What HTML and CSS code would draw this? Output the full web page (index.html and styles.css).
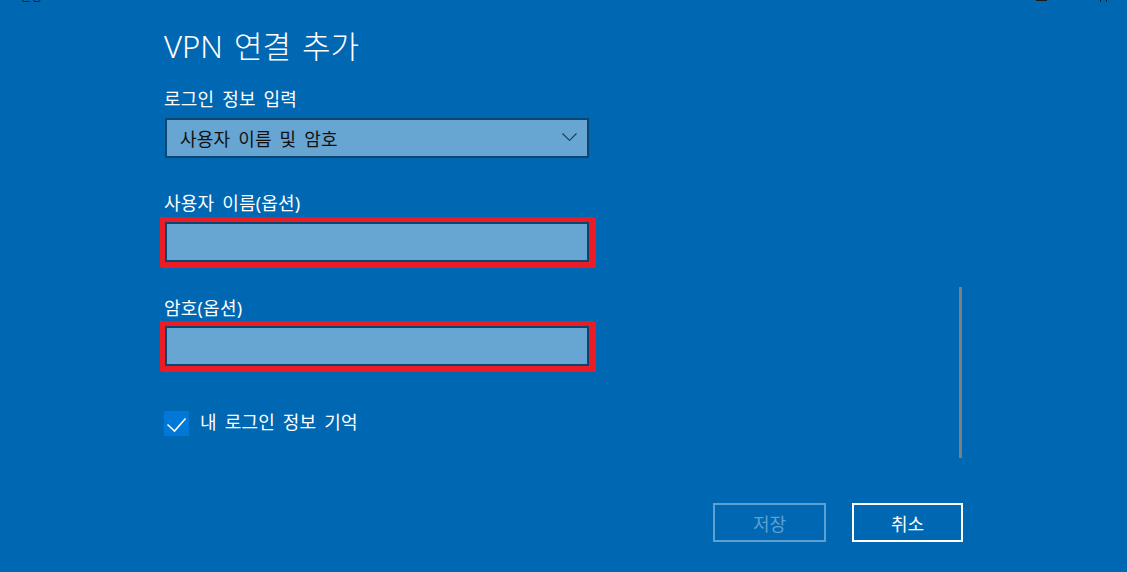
FILE: index.html
```html
<!DOCTYPE html>
<html lang="ko">
<head>
<meta charset="utf-8">
<title>VPN 연결 추가</title>
<link rel="stylesheet" href="styles.css">
</head>
<body>
<div class="titlebar">
  <span class="app-name">설정</span>
  <span class="controls">
    <span class="ctl-min"></span>
    <span class="ctl-close"></span>
  </span>
</div>
<div class="page">
  <h1 class="title">VPN 연결 추가</h1>

  <div class="label label-first">로그인 정보 입력</div>
  <div class="select">
    <span class="select-text">사용자 이름 및 암호</span>
    <svg class="chevron" width="15" height="8" viewBox="0 0 15 8"><polyline points="0.5,0.5 7.5,7.3 14.5,0.5" fill="none" stroke="#1c3950" stroke-width="1.1"/></svg>
  </div>

  <div class="label label-gap">사용자 이름(옵션)</div>
  <div class="input highlight"></div>

  <div class="label label-gap2">암호(옵션)</div>
  <div class="input input2 highlight"></div>

  <div class="check-row">
    <span class="checkbox">
      <svg width="25" height="25" viewBox="0 0 25 25"><polyline points="3.5,13.5 10.5,20 21.5,7.5" fill="none" stroke="#fff" stroke-width="1.6"/></svg>
    </span>
    <span class="check-label">내 로그인 정보 기억</span>
  </div>
</div>

<div class="scrollbar"></div>

<div class="footer">
  <button class="btn btn-disabled" disabled>저장</button>
  <button class="btn btn-primary">취소</button>
</div>
</body>
</html>
```

FILE: styles.css
```css
html, body {
  margin: 0;
  padding: 0;
  background: #0067b3;
  height: 100%;
  overflow: hidden;
}
body {
  font-family: "Noto Sans", "Noto Sans CJK KR", sans-serif;
  color: #ffffff;
  width: 1127px;
  height: 572px;
  position: relative;
}
.titlebar {
  display: flex;
  justify-content: space-between;
  height: 4px;
  overflow: visible;
  color: #1b1b1b;
}
.app-name {
  font-family: "Noto Sans CJK KR", sans-serif;
  font-size: 12px;
  line-height: 14px;
  margin: -11px 0 0 20px;
}
.controls {
  display: flex;
  align-items: flex-start;
  margin-right: 20px;
}
.ctl-min {
  width: 11px;
  height: 1px;
  background: #1b1b1b;
  margin: 0 53px 0 0;
}
.ctl-close {
  width: 5px;
  height: 2px;
  border-left: 1px solid #1b1b1b;
  border-right: 1px solid #1b1b1b;
}
.page {
  padding: 22px 0 0 164px;
  width: 425px;
}
.title {
  font-weight: 300;
  font-size: 31px;
  line-height: 40px;
  margin: 0;
  word-spacing: 3px;
}
.label {
  font-size: 18px;
  line-height: 22px;
  letter-spacing: 0.2px;
  word-spacing: 3px;
}
.label-first { margin-top: 22px; }
.label-gap { margin-top: 34px; }
.label-gap2 { margin-top: 35px; }
.select {
  margin: 8px 0 0 1px;
  box-sizing: border-box;
  width: 424px;
  height: 40px;
  background: #67a5d2;
  border: 2.5px solid #0c4570;
  display: flex;
  align-items: center;
  justify-content: space-between;
  padding: 0 10px 0 13px;
  color: #111;
  font-size: 18px;
  letter-spacing: 0.2px;
  word-spacing: 3px;
}
.chevron { margin-top: -2px; }
.input {
  margin: 8px 0 0 1px;
  box-sizing: border-box;
  width: 424px;
  height: 40px;
  background: #67a5d2;
  border: 2.5px solid #0c4570;
}
.input2 { margin-top: 7px; }
.highlight {
  box-shadow: 0 0 0 5px #ec1c24, 2px 1px 0 5px #ec1c24;
}
.check-row {
  margin-top: 45px;
  display: flex;
  align-items: center;
  gap: 11px;
}
.checkbox {
  width: 25px;
  height: 25px;
  background: #0078d7;
  display: block;
}
.checkbox svg { display: block; }
.check-label {
  font-size: 18px;
  line-height: 22px;
  letter-spacing: 0.2px;
  word-spacing: 3px;
  margin-top: -4px;
}
.scrollbar {
  position: absolute;
  left: 959px;
  top: 287px;
  width: 3px;
  height: 171px;
  background: #7b7f84;
}
.footer {
  position: absolute;
  left: 0;
  right: 164px;
  top: 503px;
  display: flex;
  justify-content: flex-end;
  gap: 26px;
}
.btn {
  box-sizing: border-box;
  width: 113px;
  height: 39px;
  background: transparent;
  font-family: "Noto Sans CJK KR", sans-serif;
  font-size: 18px;
  padding: 0;
}
.btn-disabled {
  border: 2.5px solid #5ea0d0;
  color: #5ea0d0;
}
.btn-primary {
  width: 111px;
  border: 2.5px solid #ffffff;
  color: #ffffff;
}
```
